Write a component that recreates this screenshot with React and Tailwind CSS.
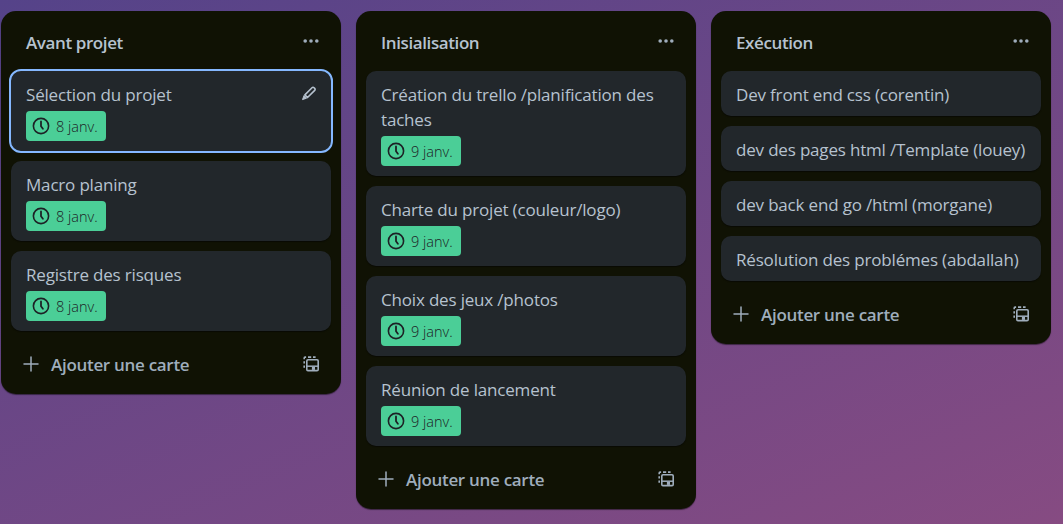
const columns = [
  {
    title: 'Avant projet',
    cards: [
      { title: 'Sélection du projet', date: '8 janv.', active: true },
      { title: 'Macro planing', date: '8 janv.' },
      { title: 'Registre des risques', date: '8 janv.' },
    ],
  },
  {
    title: 'Inisialisation',
    cards: [
      { title: 'Création du trello /planification des taches', date: '9 janv.' },
      { title: 'Charte du projet (couleur/logo)', date: '9 janv.' },
      { title: 'Choix des jeux /photos', date: '9 janv.' },
      { title: 'Réunion de lancement', date: '9 janv.' },
    ],
  },
  {
    title: 'Exécution',
    cards: [
      { title: 'Dev front end css (corentin)' },
      { title: 'dev des pages html /Template (louey)' },
      { title: 'dev back end go /html (morgane)' },
      { title: 'Résolution des problémes (abdallah)' },
    ],
  },
];

function Dots() {
  return (
    <svg width="20" height="20" viewBox="0 0 20 20" fill="#9fadbc">
      <circle cx="4.2" cy="10" r="1.8" />
      <circle cx="10" cy="10" r="1.8" />
      <circle cx="15.8" cy="10" r="1.8" />
    </svg>
  );
}

function Clock() {
  return (
    <svg width="20" height="20" viewBox="0 0 20 20" fill="none" stroke="#1d2125">
      <circle cx="10" cy="10" r="7.6" strokeWidth="1.6" />
      <path d="M10 5.4v4.8l1.9 2.5" strokeWidth="1.8" strokeLinecap="round" strokeLinejoin="round" />
    </svg>
  );
}

function Pencil() {
  return (
    <svg width="20" height="20" viewBox="0 0 20 20" fill="none" stroke="#b6c2cf" strokeWidth="1.6" strokeLinejoin="round">
      <path d="M5.9 11.9 13 4.7a1.4 1.4 0 0 1 2 0l.7.7a1.4 1.4 0 0 1 0 2L8.5 14.5Z" />
      <path d="M5 12.6 3.5 16.6 7.6 15.2Z" fill="#b6c2cf" strokeWidth="1" />
    </svg>
  );
}

function Plus() {
  return (
    <svg width="20" height="20" viewBox="0 0 20 20" fill="none" stroke="#9fadbc" strokeWidth="1.5" strokeLinecap="round">
      <path d="M10 3v14M3 10h14" />
    </svg>
  );
}

function Template() {
  return (
    <svg width="20" height="20" viewBox="0 0 20 20" fill="none" stroke="#9fadbc" strokeWidth="1.6">
      <rect x="5.8" y="5.8" width="11.4" height="10.8" rx="1.2" />
      <path d="M6 12.2h11" strokeWidth="1.5" />
      <path d="M10.9 14.4h3.1" strokeWidth="3" />
      <path d="M3.2 5.2V4a.9.9 0 0 1 .9-.9h1M7 3.1h3.2M12 3.1h2.6M3.2 7.2v2.4M3.2 11.4v2.4" strokeWidth="1.6" />
    </svg>
  );
}

function Card({ title, date, active }) {
  return (
    <div
      className={
        'flex items-start justify-between rounded-[10px] bg-[#22272b] px-[15px] py-[10px] ' +
        (active ? 'outline-2 outline-[#85b8ff]' : 'shadow-[0_1px_1px_#03040480]')
      }
    >
      <div className="flex min-w-0 flex-col items-start gap-[5px]">
        <p className="-mr-[10px] text-[17px] leading-[25px] tracking-[-0.18px] text-[#b6c2cf]">
          <span className="relative top-px">{title}</span>
        </p>
        {date && (
          <span className="flex h-[30px] w-[80px] items-center gap-[5px] rounded-[4px] bg-[#4bce97] pl-[5px] text-[14.5px] font-light whitespace-nowrap text-[#1d2125]">
            <Clock />
            <span className="pt-[2px]">{date}</span>
          </span>
        )}
      </div>
      {active && (
        <span className="-mr-[3px] pt-[2px]">
          <Pencil />
        </span>
      )}
    </div>
  );
}

function Column({ title, cards }) {
  return (
    <section className="flex w-[340px] shrink-0 flex-col rounded-[15px] bg-[#101204] px-[10px] shadow-[0_1px_1px_#03040480]">
      <header className="flex h-[60px] items-center justify-between pr-[10px] pl-[15px]">
        <h2 className="pt-[2px] text-[17px] leading-[25px] font-semibold tracking-[-0.4px] text-[#b6c2cf]">{title}</h2>
        <Dots />
      </header>
      <div className="flex flex-col gap-[10px]">
        {cards.map((card) => (
          <Card key={card.title} {...card} />
        ))}
      </div>
      <footer className="flex h-[63px] items-center justify-between pt-[3px] pr-[10px] pl-[10px] text-[#9fadbc]">
        <button className="flex items-center gap-[10px] text-[17px] leading-[25px] font-semibold tracking-[-0.3px]">
          <Plus />
          <span className="pt-px">Ajouter une carte</span>
        </button>
        <Template />
      </footer>
    </section>
  );
}

export default function App() {
  return (
    <main className="flex h-[524px] w-[1063px] items-start gap-[15px] overflow-hidden bg-[linear-gradient(157deg,#554389,#864b82)] pt-[11px] pl-px font-['Open_Sans','Noto_Sans',sans-serif]">
      {columns.map((column) => (
        <Column key={column.title} {...column} />
      ))}
    </main>
  );
}
